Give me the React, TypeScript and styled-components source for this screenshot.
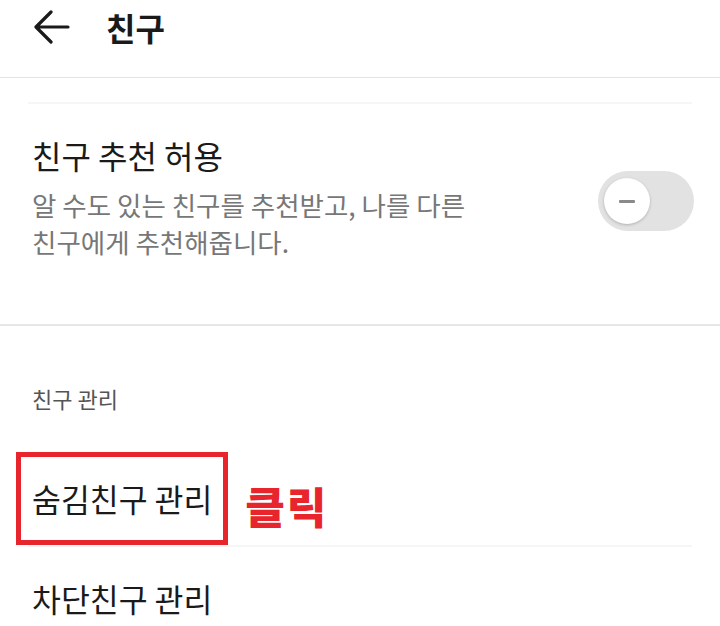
import React from 'react';
import styled, { createGlobalStyle } from 'styled-components';

const GlobalStyle = createGlobalStyle`
	html, body {
		margin: 0;
		padding: 0;
		background: #ffffff;
	}
	body {
		font-family: 'Noto Sans CJK KR', 'Noto Sans', sans-serif;
		color: #1a1a1a;
	}
`;

function App() {
	return (
		<Page>
			<GlobalStyle />
			<Header>
				<BackButton aria-label="뒤로">
					<svg width="36" height="34" viewBox="0 0 36 34" fill="none">
						<path
							d="M34 17H3M17 2L2 17l15 15"
							stroke="#1a1a1a"
							strokeWidth="3.2"
							strokeLinecap="round"
							strokeLinejoin="round"
						/>
					</svg>
				</BackButton>
				<Title>친구</Title>
			</Header>

			<FaintLine $top={24} />

			<SettingRow>
				<SettingText>
					<RowLabel>친구 추천 허용</RowLabel>
					<Description>
						알 수도 있는 친구를 추천받고, 나를 다른
						<br />
						친구에게 추천해줍니다.
					</Description>
				</SettingText>
				<Toggle>
					<Knob>
						<Minus />
					</Knob>
				</Toggle>
			</SettingRow>

			<Divider />

			<SectionLabel>친구 관리</SectionLabel>

			<MenuRow>
				<Highlight>
					<RowLabel $size={31.4}>숨김친구 관리</RowLabel>
				</Highlight>
				<ClickNote>클릭</ClickNote>
			</MenuRow>
			<FaintLine $top={0} />
			<PlainRow>
				<RowLabel $size={31.4}>차단친구 관리</RowLabel>
			</PlainRow>
		</Page>
	);
}

const Page = styled.div`
	width: 720px;
	height: 626px;
	overflow: hidden;
	background: #ffffff;
`;

const Header = styled.header`
	height: 78px;
	display: flex;
	align-items: flex-start;
	padding: 9px 0 0 34px;
	box-sizing: border-box;
	border-bottom: 1px solid #e3e3e3;
	gap: 36px;
`;

const BackButton = styled.button`
	border: none;
	background: none;
	padding: 0;
	margin-top: 1px;
	display: flex;
	cursor: pointer;
`;

const Title = styled.h1`
	margin: 0;
	font-size: 32px;
	font-weight: 700;
	line-height: 40px;
	margin-top: -2px;
	color: #1a1a1a;
`;

const FaintLine = styled.div<{ $top: number }>`
	height: 2px;
	margin: ${(p) => p.$top}px 28px 0;
	background: #f6f6f6;
`;

const SettingRow = styled.div`
	display: flex;
	align-items: flex-start;
	justify-content: space-between;
	padding: 29px 26px 0 32px;
	height: 220px;
	box-sizing: border-box;
`;

const SettingText = styled.div`
	display: flex;
	flex-direction: column;
`;

const RowLabel = styled.div<{ $size?: number }>`
	font-size: ${(p) => p.$size ?? 32}px;
	line-height: 44px;
	color: #1a1a1a;
`;

const Description = styled.p`
	margin: 9px 0 0;
	font-size: 26.5px;
	line-height: 37px;
	color: #777777;
`;

const Toggle = styled.div`
	margin-top: 38px;
	width: 96px;
	height: 60px;
	border-radius: 30px;
	background: #e2e2e2;
	display: flex;
	align-items: center;
	padding-left: 6px;
	box-sizing: border-box;
`;

const Knob = styled.div`
	width: 46px;
	height: 46px;
	border-radius: 50%;
	background: #ffffff;
	box-shadow: 0 1px 3px rgba(0, 0, 0, 0.22);
	display: flex;
	align-items: center;
	justify-content: center;
`;

const Minus = styled.span`
	width: 16px;
	height: 3px;
	border-radius: 1px;
	background: #8a8a8a;
`;

const Divider = styled.div`
	height: 2px;
	background: #e6e6e6;
`;

const SectionLabel = styled.div`
	padding: 58px 32px 0;
	height: 126px;
	box-sizing: border-box;
	font-size: 22px;
	line-height: 28px;
	color: #555555;
`;

const MenuRow = styled.div`
	display: flex;
	align-items: center;
	padding-left: 16px;
	height: 93px;
	gap: 17px;
`;

const Highlight = styled.div`
	border: 5px solid #e8242c;
	height: 93px;
	box-sizing: border-box;
	padding: 0 11px 0 11px;
	display: flex;
	align-items: center;
`;

const ClickNote = styled.span`
	margin-top: 12px;
	font-size: 43px;
	font-weight: 900;
	color: #e8242c;
	letter-spacing: 2px;
`;

const PlainRow = styled.div`
	padding: 30px 32px 0;
`;

export default App;
